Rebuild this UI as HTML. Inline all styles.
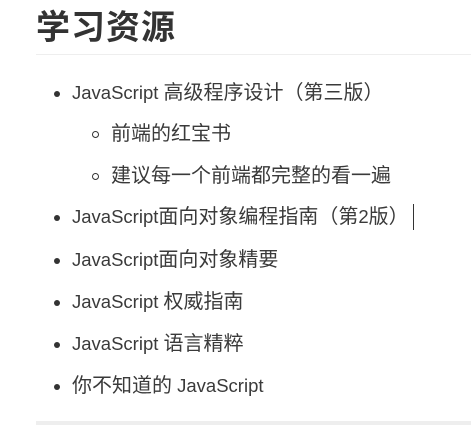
<!DOCTYPE html>
<html><head><meta charset="utf-8"><style>
html,body{margin:0;padding:0;background:#fff;width:471px;height:425px;overflow:hidden}
body{font-family:"Liberation Sans","Noto Sans CJK SC",sans-serif;color:#3a3a3a;position:relative}
h1{position:absolute;left:36px;top:4px;margin:0;font-size:34px;font-weight:bold;line-height:48px;color:#333;letter-spacing:1px}
.hr{position:absolute;left:36px;right:0;top:54px;height:1px;background:#eee}
.bar{position:absolute;left:36px;right:0;top:421px;height:4px;background:#eee}
.it{position:absolute;left:72px;font-size:20px;line-height:24px;white-space:nowrap}
.it .l{font-size:18.5px}
.it:before{content:"";position:absolute;left:-18px;top:10px;width:6px;height:6px;border-radius:50%;background:#333}
.sub{left:111px}
.sub:before{left:-19px;top:9px;width:5px;height:5px;background:none;border:1px solid #333}
.cur{position:absolute;left:413px;top:204px;width:1px;height:26px;background:#333}
</style></head><body>
<h1>学习资源</h1>
<div class="hr"></div>
<div class="it" style="top:81px"><span class="l">JavaScript </span>高级程序设计（第三版）</div>
<div class="it sub" style="top:122px">前端的红宝书</div>
<div class="it sub" style="top:164px">建议每一个前端都完整的看一遍</div>
<div class="it" style="top:205px"><span class="l">JavaScript</span>面向对象编程指南（第<span class="l">2</span>版）</div>
<div class="cur"></div>
<div class="it" style="top:248px"><span class="l">JavaScript</span>面向对象精要</div>
<div class="it" style="top:290px"><span class="l">JavaScript </span>权威指南</div>
<div class="it" style="top:332px"><span class="l">JavaScript </span>语言精粹</div>
<div class="it" style="top:374px">你不知道的<span class="l"> JavaScript</span></div>
<div class="bar"></div>
</body></html>
